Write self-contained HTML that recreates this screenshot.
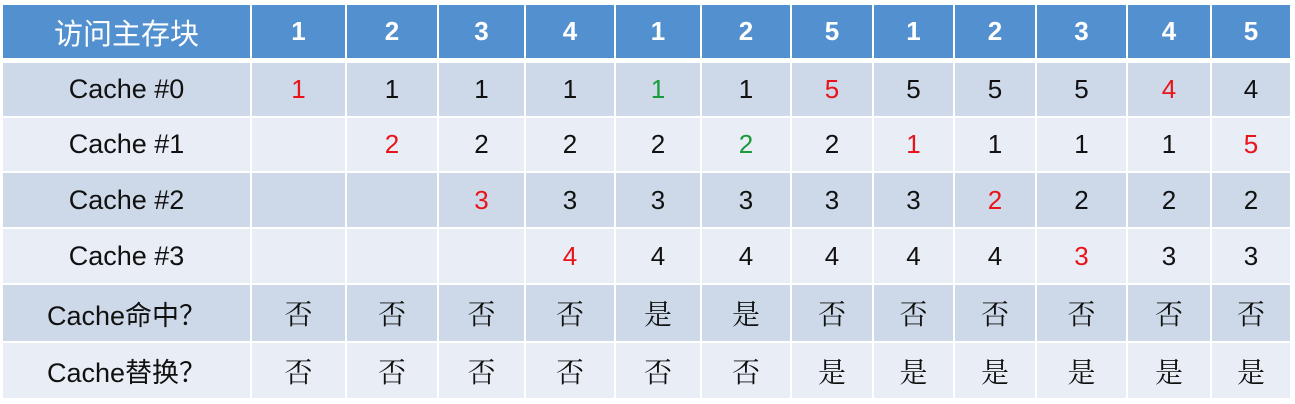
<!DOCTYPE html>
<html><head><meta charset="utf-8"><style>
body{margin:0;width:1295px;height:404px;background:#fff;overflow:hidden;position:relative;font-family:"Liberation Sans","Noto Sans CJK SC",sans-serif}
.c{position:absolute;display:flex;align-items:center;justify-content:center;color:#111;font-size:26px}
.h{background:#5290cf;color:#fff;font-weight:bold;font-size:26px}
.d{background:#cdd9e9}
.l{background:#e8edf6}
.r{color:#e8141a}.g{color:#1a9a3a}
.z{font-family:"Noto Serif CJK SC",serif;font-size:28px}
.hz{font-weight:normal;font-size:29px;font-family:"Noto Sans CJK SC",sans-serif}
.lb{font-size:27px}
</style></head><body>
<script>
const xs=[3,252,347,439,526,616,702,792,874,955,1037,1128,1212,1290];
const ys=[[5,58],[63,116],[118,171],[173,227],[229,283],[285,341],[343,398]];
const rows=[
["访问主存块","1","2","3","4","1","2","5","1","2","3","4","5"],
["Cache #0","r1","1","1","1","g1","1","r5","5","5","5","r4","4"],
["Cache #1","","r2","2","2","2","g2","2","r1","1","1","1","r5"],
["Cache #2","","","r3","3","3","3","3","3","r2","2","2","2"],
["Cache #3","","","","r4","4","4","4","4","4","r3","3","3"],
["Cache命中？","否","否","否","否","是","是","否","否","否","否","否","否"],
["Cache替换？","否","否","否","否","否","否","是","是","是","是","是","是"]];
let h="";
rows.forEach((row,i)=>{row.forEach((t,j)=>{
 let cls=i==0?"h":(i%2?"d":"l");
 if(i==0&&j==0)cls+=" hz";
 if(i>0&&j==0)cls+=" lb";
 if(t[0]=="r"){cls+=" r";t=t.slice(1)} else if(t[0]=="g"){cls+=" g";t=t.slice(1)}
 if(i>=5&&j>0)cls+=" z";
 const x=xs[j],w=xs[j+1]-x-(j<12?2:0);
 h+=`<div class="c ${cls}" style="left:${x}px;top:${ys[i][0]}px;width:${w}px;height:${ys[i][1]-ys[i][0]}px">${t}</div>`;
})});
document.body.innerHTML=h;
</script>
</body></html>
